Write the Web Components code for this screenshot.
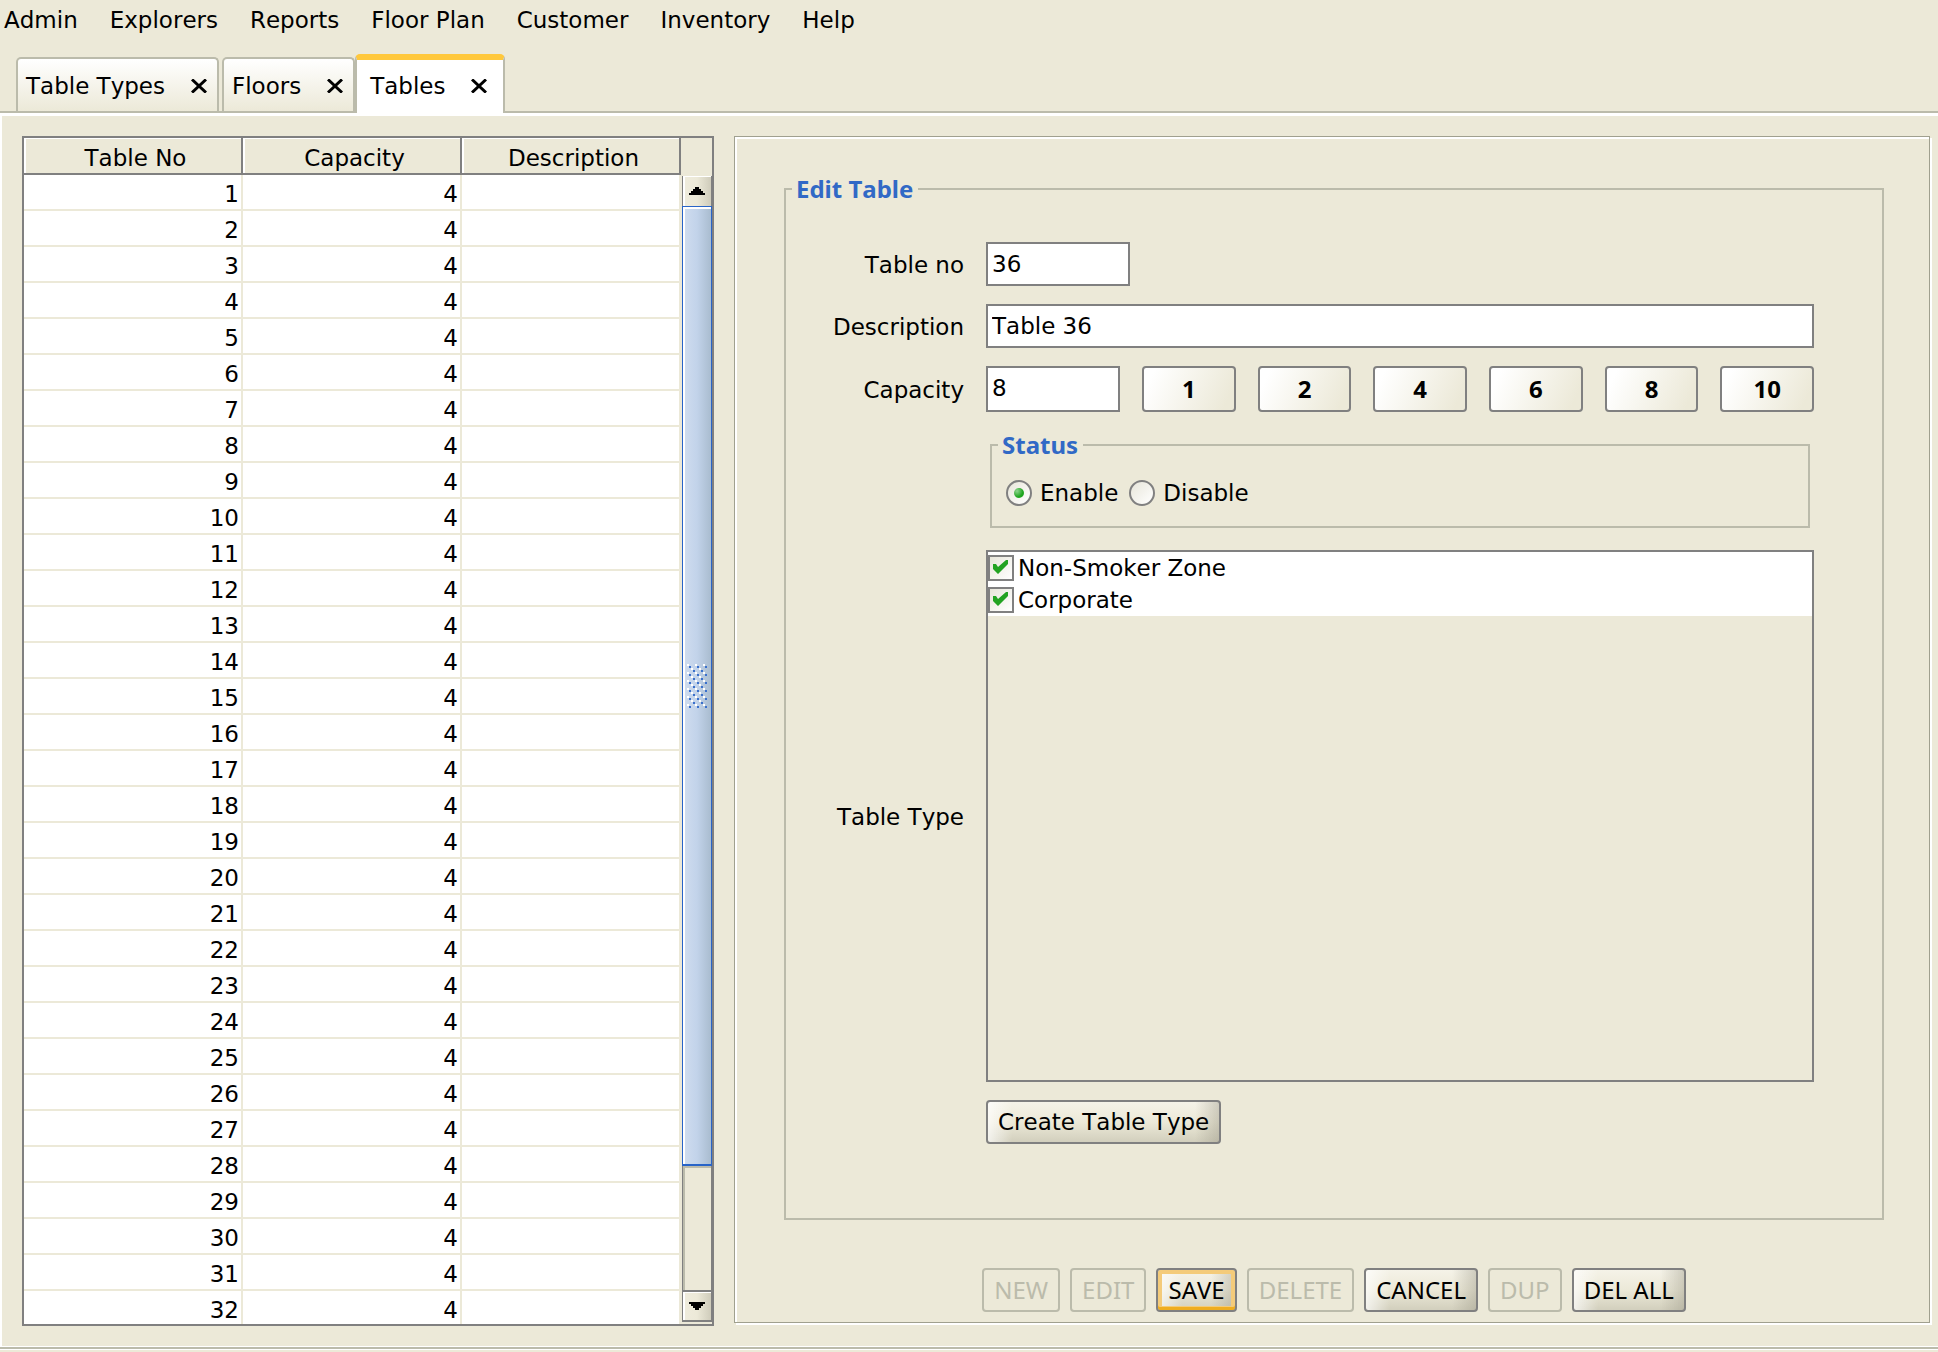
<!DOCTYPE html>
<html lang="en">
<head>
<meta charset="utf-8">
<title>Tables</title>
<style>
    html, body{
        height: 100%;
        margin: 0;
    }

    body{
        --back: #ece9d8;
        --line: #bbbbab;
        --dark: #808080;
        --title: #3169c6;
        --caption: 24px/30px "Noto Sans", "Open Sans", sans-serif;
        font: 23px/30px "DejaVu Sans", sans-serif;
        font-kerning: none;
        color: #000;
        background: var(--back);
    }
</style>
</head>
<body>
<back-office></back-office>

<script>
function define (name, html, setup) {
    const template = document.createElement('template');
    template.innerHTML = html;

    customElements.define(name, class extends HTMLElement {
        constructor () {
            super();
            this._shadowRoot = this.attachShadow({ mode: 'open' });
            this._shadowRoot.appendChild(template.content.cloneNode(true));
        }

        connectedCallback () {
            if(setup) setup(this, this._shadowRoot);
        }
    });
}

define('menu-bar', `
    <style>
        :host{
            display: block;
        }

        nav{
            display: flex;
            gap: 32px;
            padding: 0 4px;
        }
    </style>
    <nav><slot></slot></nav>
`);

define('menu-item', `
    <style>
        :host{
            display: block;
        }

        a{
            color: inherit;
            text-decoration: none;
            line-height: 40px;
            white-space: nowrap;
        }
    </style>
    <a href="#"><slot></slot></a>
`);

define('tab-strip', `
    <style>
        :host{
            display: flex;
            align-items: flex-end;
            height: 71px;
            padding-left: 16px;
            border-bottom: 2px solid var(--line);
        }
    </style>
    <slot></slot>
`);

define('tab-item', `
    <style>
        :host{
            display: flex;
            align-items: center;
            gap: 26px;
            height: 50px;
            padding: 2px 10px 0 8px;
            border: 2px solid var(--line);
            border-bottom: 0;
            border-radius: 5px 5px 0 0;
            background: linear-gradient(#fff, var(--back));
            margin-right: 3px;
            white-space: nowrap;
        }

        :host([selected]){
            height: 51px;
            margin: 0 0 -2px -3px;
            padding: 0 16px 2px 13px;
            border-top: 6px solid #ffc83c;
            background: #fff;
        }

        button{
            display: flex;
            padding: 0;
            border: 0;
            background: none;
            font: inherit;
            font-kerning: inherit;
            color: inherit;
        }
    </style>
    <button type="button" class="name"><slot></slot></button>
    <button type="button" aria-label="Close">
        <svg width="16" height="14" viewBox="0 0 16 14" stroke="#000" stroke-width="3" fill="none">
            <path d="M1 0.5 L15 13.5 M15 0.5 L1 13.5"/>
        </svg>
    </button>
`);

define('scroll-bar', `
    <style>
        :host{
            display: flex;
            flex-direction: column;
            box-sizing: border-box;
            width: 31px;
            padding-left: 1px;
        }

        button{
            display: flex;
            align-items: center;
            justify-content: center;
            box-sizing: border-box;
            height: 30px;
            padding: 0;
            border: 0;
            border-left: 1px solid var(--dark);
            border-right: 1px solid var(--dark);
            background: linear-gradient(90deg, #efecdd, var(--back) 50%, #cfccbb);
            box-shadow: inset 2px 1px #fff;
        }

        .down{
            border-bottom: 2px solid var(--dark);
            margin-bottom: 2px;
        }

        .thumb{
            flex: 961;
            display: flex;
            align-items: center;
            justify-content: center;
            border: 1px solid #2864c8;
            border-bottom-width: 2px;
            background: linear-gradient(90deg, #d0ddef, #c2d3ea 50%, #a9bccf);
            box-shadow: inset 2px 2px #fff;
        }

        .track{
            flex: 124;
            border-left: 1px solid var(--dark);
            border-right: 1px solid var(--dark);
            border-bottom: 2px solid var(--dark);
            box-shadow: inset 2px 2px var(--line);
        }
    </style>
    <button type="button" aria-label="Scroll up">
        <svg width="16" height="8" viewBox="0 0 16 8"><path d="M0 8V6H2V4H4V2H6V0H10V2H12V4H14V6H16V8Z"/></svg>
    </button>
    <div class="thumb">
        <svg width="20" height="44" viewBox="0 0 20 44" shape-rendering="crispEdges">
            <defs>
                <pattern id="grip" width="8" height="8" patternUnits="userSpaceOnUse">
                    <path d="M0 0h2v2H0zM4 4h2v2H4z" fill="#fff"/>
                    <path d="M2 2h2v2H2zM6 6h2v2H6z" fill="#3a70cc"/>
                </pattern>
            </defs>
            <rect width="20" height="44" fill="url(#grip)"/>
        </svg>
    </div>
    <div class="track"></div>
    <button type="button" class="down" aria-label="Scroll down">
        <svg width="16" height="8" viewBox="0 0 16 8"><path d="M0 0V2H2V4H4V6H6V8H10V6H12V4H14V2H16V0Z"/></svg>
    </button>
`);

define('data-grid', `
    <style>
        :host{
            display: flex;
            min-height: 0;
            border: 2px solid var(--dark);
        }

        .view{
            flex: 1;
            overflow: hidden;
            background: #fff;
        }

        table{
            width: 100%;
            table-layout: fixed;
            border-collapse: separate;
            border-spacing: 0;
        }

        th{
            box-sizing: border-box;
            height: 37px;
            padding: 5px 0 0 6px;
            font-weight: normal;
            line-height: 28px;
            border-right: 2px solid var(--dark);
            border-bottom: 2px solid var(--dark);
            background: var(--back);
            box-shadow: inset 2px 1px #fff;
        }

        td{
            box-sizing: border-box;
            height: 36px;
            padding: 4px 2px 0;
            text-align: right;
            border-right: 2px solid var(--back);
            border-bottom: 2px solid var(--back);
        }

        scroll-bar{
            margin-top: 38px;
        }
    </style>
    <div class="view">
        <table>
            <thead><tr><th>Table No</th><th>Capacity</th><th>Description</th></tr></thead>
            <tbody></tbody>
        </table>
    </div>
    <scroll-bar></scroll-bar>
`, (host, root) => {
    let rows = '';
    for(let i = 1; i <= parseInt(host.getAttribute('rows')); i++) {
        rows += `<tr><td>${i}</td><td>4</td><td></td></tr>`;
    }
    root.querySelector('tbody').innerHTML = rows;
});

define('group-box', `
    <style>
        :host{
            display: flex;
        }

        fieldset{
            flex: 1;
            display: flex;
            flex-direction: column;
            min-width: 0;
            margin: 0;
            padding: 0;
            border: 2px solid var(--line);
        }

        legend{
            margin-left: 6px;
            padding: 0 5px 0 4px;
            font: var(--caption);
            font-weight: bold;
            font-kerning: none;
            color: var(--title);
        }
    </style>
    <fieldset>
        <legend><slot name="title"></slot></legend>
        <slot></slot>
    </fieldset>
`);

define('push-button', `
    <style>
        :host{
            display: flex;
        }

        button{
            flex: 1;
            box-sizing: border-box;
            height: 44px;
            padding: 0 10px;
            border: 2px solid var(--dark);
            border-radius: 4px;
            font: inherit;
            font-kerning: none;
            color: inherit;
            white-space: nowrap;
            background:
                linear-gradient(90deg, rgba(255,255,255,.7), rgba(255,255,255,0) 24px),
                linear-gradient(270deg, rgba(150,147,130,.4), rgba(150,147,130,0) 24px),
                linear-gradient(#f5f3e8, var(--back) 50%, #d2cfbd);
        }

        :host([flat]) button{
            height: 46px;
            background: linear-gradient(115deg, #fff 10%, var(--back) 90%);
        }

        :host([focused]) button{
            box-shadow: inset 0 -3px #efad20, inset 0 0 0 4px #f4cb7a;
        }

        button:disabled{
            color: var(--line);
            border-color: var(--line);
            background: none;
        }
    </style>
    <button type="button"><slot></slot></button>
`, (host, root) => {
    root.querySelector('button').disabled = host.hasAttribute('disabled');
});

define('table-form', `
    <style>
        :host{
            flex: 1;
            display: grid;
            grid-template-columns: 132px 1fr;
            grid-template-rows: auto auto auto auto 1fr auto;
            gap: 18px 22px;
            align-items: center;
            padding: 38px 68px 74px 46px;
        }

        .label{
            padding-top: 2px;
            text-align: right;
            white-space: nowrap;
        }

        .text{
            box-sizing: border-box;
            width: 100%;
            height: 44px;
            margin: 0;
            padding: 0 4px;
            border: 2px solid var(--dark);
            border-radius: 0;
            background: #fff;
            font: inherit;
            font-kerning: none;
            color: inherit;
        }

        .number{
            width: 144px;
        }

        .capacity{
            display: grid;
            grid-template-columns: 134px repeat(6, 1fr);
            gap: 22px;
        }

        .capacity .text{
            height: 46px;
            padding-bottom: 2px;
        }

        push-button[flat]{
            font: var(--caption);
            font-weight: bold;
        }

        .status{
            grid-column: 2;
            margin: 0 4px 4px;
        }

        .radios{
            display: flex;
            gap: 11px;
            padding: 18px 14px;
        }

        .radios label, .types label{
            display: flex;
            align-items: center;
        }

        .radios label{
            gap: 8px;
        }

        input[type=radio], input[type=checkbox]{
            appearance: none;
            display: grid;
            place-items: center;
            box-sizing: border-box;
            width: 26px;
            height: 26px;
            margin: 0;
            border: 2px solid var(--dark);
            background: linear-gradient(135deg, #e8e6da, #fff);
        }

        input[type=radio]{
            border-radius: 50%;
        }

        input[type=radio]:checked::before{
            content: "";
            width: 10px;
            height: 10px;
            border-radius: 50%;
            background: radial-gradient(circle at 30% 30%, #8fd48f, #1fa51f 60%);
        }

        input[type=checkbox]:checked::before{
            content: "";
            width: 22px;
            height: 22px;
            background: #22a322;
            clip-path: polygon(3px 7px, 6px 7px, 8px 10px, 16px 3px, 18px 3px, 18px 7px, 8px 17px, 3px 12px);
        }

        .types{
            align-self: stretch;
            border: 2px solid var(--dark);
        }

        .types label{
            gap: 4px;
            height: 32px;
            background: #fff;
        }

        .create{
            grid-column: 2;
            justify-self: start;
        }
    </style>
    <label class="label" for="number">Table no</label>
    <input class="text number" id="number" value="36">
    <label class="label" for="description">Description</label>
    <input class="text" id="description" value="Table 36">
    <label class="label" for="capacity">Capacity</label>
    <div class="capacity">
        <input class="text" id="capacity" value="8">
        <push-button flat>1</push-button>
        <push-button flat>2</push-button>
        <push-button flat>4</push-button>
        <push-button flat>6</push-button>
        <push-button flat>8</push-button>
        <push-button flat>10</push-button>
    </div>
    <group-box class="status">
        <span slot="title">Status</span>
        <div class="radios">
            <label><input type="radio" name="status" checked>Enable</label>
            <label><input type="radio" name="status">Disable</label>
        </div>
    </group-box>
    <span class="label" id="type">Table Type</span>
    <div class="types" role="group" aria-labelledby="type">
        <label><input type="checkbox" checked>Non-Smoker Zone</label>
        <label><input type="checkbox" checked>Corporate</label>
    </div>
    <push-button class="create">Create Table Type</push-button>
`, (host, root) => {
    const $capacity = root.querySelector('#capacity');
    root.querySelectorAll('push-button[flat]').forEach((button) => {
        button.addEventListener('click', () => {
            $capacity.value = button.textContent;
        });
    });
});

define('edit-panel', `
    <style>
        :host{
            display: flex;
            flex-direction: column;
            min-height: 0;
            box-sizing: border-box;
            margin-bottom: 3px;
            padding: 37px 45px 10px 49px;
            border: 1px solid #a0a08f;
            box-shadow: inset 2px 2px #fff, 2px 2px #fff;
        }

        group-box{
            flex: 1;
        }

        .actions{
            display: flex;
            justify-content: center;
            gap: 10px;
            margin-top: 48px;
            font: var(--caption);
        }
    </style>
    <group-box>
        <span slot="title">Edit Table</span>
        <table-form></table-form>
    </group-box>
    <div class="actions">
        <push-button disabled>NEW</push-button>
        <push-button disabled>EDIT</push-button>
        <push-button focused>SAVE</push-button>
        <push-button disabled>DELETE</push-button>
        <push-button>CANCEL</push-button>
        <push-button disabled>DUP</push-button>
        <push-button>DEL ALL</push-button>
    </div>
`);

define('back-office', `
    <style>
        :host{
            display: flex;
            flex-direction: column;
            height: 100%;
        }

        main{
            flex: 1;
            min-height: 0;
            display: grid;
            grid-template-columns: minmax(0, 692fr) minmax(0, 1196fr);
            grid-template-rows: minmax(0, 1fr);
            gap: 20px;
            padding: 20px 8px 20px 20px;
            border: solid #fff;
            border-width: 3px 0 1px 2px;
        }

        footer{
            height: 3px;
            border-top: 2px solid var(--line);
            box-shadow: inset 0 1px #fff;
        }
    </style>
    <menu-bar>
        <menu-item>Admin</menu-item>
        <menu-item>Explorers</menu-item>
        <menu-item>Reports</menu-item>
        <menu-item>Floor Plan</menu-item>
        <menu-item>Customer</menu-item>
        <menu-item>Inventory</menu-item>
        <menu-item>Help</menu-item>
    </menu-bar>
    <tab-strip>
        <tab-item>Table Types</tab-item>
        <tab-item>Floors</tab-item>
        <tab-item selected>Tables</tab-item>
    </tab-strip>
    <main>
        <data-grid rows="32"></data-grid>
        <edit-panel></edit-panel>
    </main>
    <footer></footer>
`);
</script>
</body>
</html>
